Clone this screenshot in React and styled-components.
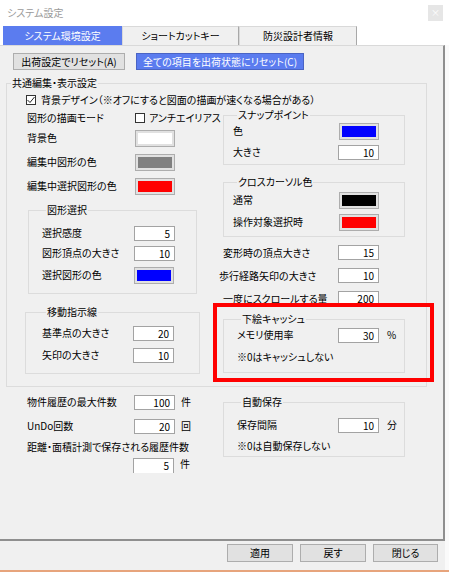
import React from "react";
import styled, { createGlobalStyle } from "styled-components";

const GlobalStyle = createGlobalStyle`
  html, body {
    margin: 0;
    padding: 0;
    background: #fff;
  }
  body {
    font-family: "Noto Sans CJK JP", "Noto Sans", sans-serif;
    font-size: 10px;
    line-height: 12px;
    color: #000;
    font-feature-settings: "palt";
  }
  * {
    box-sizing: border-box;
  }
`;

const Window = styled.div`
  width: 449px;
  height: 572px;
  display: flex;
  flex-direction: column;
  background: #fff;
  border-bottom: 2px solid #e7a47c;
  overflow: hidden;
`;

const TitleBar = styled.div`
  height: 26px;
  flex: none;
  display: flex;
  align-items: center;
  justify-content: space-between;
  padding: 0 6px 0 7px;
`;

const Title = styled.span`
  color: #9a9a9a;
`;

const CloseButton = styled.div`
  width: 15px;
  height: 16px;
  background: #e6e6e6;
  color: #fff;
  font-size: 9px;
  display: flex;
  align-items: center;
  justify-content: center;
`;

const TabStrip = styled.div`
  height: 19px;
  flex: none;
  display: flex;
  padding-left: 3px;
`;

const Tab = styled.div`
  width: ${(p) => p.$w}px;
  height: 19px;
  display: flex;
  align-items: center;
  justify-content: center;
  white-space: nowrap;
  background: ${(p) => (p.$active ? "#5b7cef" : "#f0f0f0")};
  color: ${(p) => (p.$active ? "#fff" : "#000")};
  border: 1px solid ${(p) => (p.$active ? "#5b7cef" : "#d9d9d9")};
  border-right-color: ${(p) => (p.$active ? "#5b7cef" : "#a8a8a8")};
  border-bottom: none;
`;

const Body = styled.div`
  flex: 1;
  display: flex;
  min-height: 0;
`;

const Main = styled.div`
  width: 445px;
  display: flex;
  flex-direction: column;
`;

const Gutter = styled.div`
  flex: 1;
  background: #fafafa;
`;

const Panel = styled.div`
  flex: 1;
  background: #f0f0f0;
  border-top: 1px solid #d9d9d9;
  border-right: 2px solid #8f8f8f;
  border-bottom: 2px solid #8f8f8f;
  padding-top: 7px;
`;

const TopButtons = styled.div`
  display: flex;
  gap: 11px;
  margin-left: 13px;
`;

const Button = styled.div`
  width: ${(p) => p.$w}px;
  height: ${(p) => p.$h || 17}px;
  display: flex;
  align-items: center;
  justify-content: center;
  white-space: nowrap;
  background: ${(p) => (p.$primary ? "#5b7cef" : "#e1e1e1")};
  color: ${(p) => (p.$primary ? "#fff" : "#000")};
  border: 1px solid ${(p) => (p.$primary ? "#4a64c4" : "#adadad")};
`;

const Group = styled.fieldset`
  margin: ${(p) => p.$mt || 0}px 0 0 ${(p) => p.$ml || 0}px;
  width: ${(p) => p.$w}px;
  padding: ${(p) => p.$pt || 0}px 0 ${(p) => p.$pb || 0}px ${(p) => p.$pl || 0}px;
  border: 1px solid #dcdcdc;
  min-width: 0;
`;

const Legend = styled.legend`
  margin-left: 4px;
  padding: 0 1px;
  line-height: 12px;
  white-space: nowrap;
`;

const Highlight = styled.div`
  position: relative;
  margin-top: 3px;

  &::after {
    content: "";
    position: absolute;
    top: -10px;
    left: -6px;
    right: -8px;
    bottom: -9px;
    border: 4px solid #ff0000;
    pointer-events: none;
  }
`;

const CheckRow = styled.div`
  display: flex;
  align-items: center;
  height: 12px;
  margin: 5px 0 0 19px;
  gap: 5px;
  white-space: nowrap;
`;

const Box = styled.span`
  width: 10px;
  height: 10px;
  flex: none;
  border: 1px solid #333;
  background: #fff;
  display: flex;
  align-items: center;
  justify-content: center;
  margin-right: ${(p) => p.$mr || 0}px;
`;

const Columns = styled.div`
  display: grid;
  grid-template-columns: ${(p) => p.$left}px 1fr;
  margin-top: ${(p) => p.$mt || 0}px;
`;

const Column = styled.div`
  display: flex;
  flex-direction: column;
  padding-left: ${(p) => p.$pl || 0}px;
  padding-top: ${(p) => p.$pt || 0}px;
`;

const Row = styled.div`
  display: flex;
  align-items: ${(p) => (p.$top ? "flex-start" : "center")};
  height: ${(p) => p.$h}px;
  padding-top: ${(p) => (p.$top ? 2 : 0)}px;
  white-space: nowrap;
`;

const Label = styled.span`
  width: ${(p) => (p.$w ? `${p.$w}px` : "auto")};
  flex: none;
  white-space: nowrap;
  margin-left: ${(p) => p.$shift || 0}px;
`;

const Field = styled.div`
  width: 41px;
  height: 15px;
  flex: none;
  background: #fff;
  border: 1px solid #a3a3a3;
  border-bottom: ${(p) => (p.$clipped ? "none" : "1px solid #a3a3a3")};
  text-align: right;
  padding-right: 4px;
  line-height: 13px;
`;

const Swatch = styled.div`
  width: 40px;
  height: 17px;
  flex: none;
  border: 1px solid #adadad;
  background: #e1e1e1;
  padding: 2px;

  &::before {
    content: "";
    display: block;
    width: 100%;
    height: 100%;
    background: ${(p) => p.$color};
  }
`;

const Unit = styled.span`
  margin-left: ${(p) => p.$gap || 6}px;
`;

const ButtonBar = styled.div`
  height: 29px;
  flex: none;
  display: flex;
  justify-content: flex-end;
  gap: 7px;
  padding: 3px 7px 0 0;
  background: #f0f0f0;
`;

const Check = ({ checked, mr }) => (
  <Box $mr={mr}>
    {checked && (
      <svg width="8" height="8" viewBox="0 0 8 8">
        <polyline points="0.5,4 3,6.5 7.5,1" fill="none" stroke="#222" strokeWidth="1" />
      </svg>
    )}
  </Box>
);

const NumRow = ({ label, value, h, w, unit, gap, shift }) => (
  <Row $h={h}>
    <Label $w={w} $shift={shift}>{label}</Label>
    <Field>{value}</Field>
    {unit && <Unit $gap={gap}>{unit}</Unit>}
  </Row>
);

const ColorRow = ({ label, color, h, w }) => (
  <Row $h={h}>
    <Label $w={w}>{label}</Label>
    <Swatch $color={color} />
  </Row>
);

export default function App() {
  return (
    <>
      <GlobalStyle />
      <Window>
        <TitleBar>
          <Title>システム設定</Title>
          <CloseButton>×</CloseButton>
        </TitleBar>

        <TabStrip>
          <Tab $w={119} $active>システム環境設定</Tab>
          <Tab $w={117}>ショートカットキー</Tab>
          <Tab $w={118}>防災設計者情報</Tab>
        </TabStrip>

        <Body>
          <Main>
            <Panel>
              <TopButtons>
                <Button $w={112}>出荷設定でリセット(A)</Button>
                <Button $w={168} $primary>全ての項目を出荷状態にリセット(C)</Button>
              </TopButtons>

              <Group $mt={7} $ml={6} $w={421} $pb={12}>
                <Legend>共通編集・表示設定</Legend>
                <CheckRow>
                  <Check checked />
                  <span>背景デザイン（※オフにすると図面の描画が速くなる場合がある）</span>
                </CheckRow>

                <Columns $left={212} $mt={3}>
                  <Column $pl={20}>
                    <Row $h={17}>
                      <Label $w={108}>図形の描画モード</Label>
                      <Check mr={4} />
                      <Label>アンチエイリアス</Label>
                    </Row>
                    <ColorRow h={24} w={108} label="背景色" color="#ffffff" />
                    <ColorRow h={24} w={108} label="編集中図形の色" color="#808080" />
                    <ColorRow h={24} w={108} label="編集中選択図形の色" color="#ff0000" />

                    <Group $mt={6} $ml={1} $w={169} $pt={7} $pb={6} $pl={13}>
                      <Legend>図形選択</Legend>
                      <NumRow h={20} w={92} label="選択感度" value="5" />
                      <NumRow h={20} w={92} label="図形頂点の大きさ" value="10" />
                      <ColorRow h={24} w={92} label="選択図形の色" color="#0000ff" />
                    </Group>

                    <Group $mt={12} $ml={-2} $w={175} $pt={4} $pb={7} $pl={16}>
                      <Legend>移動指示線</Legend>
                      <NumRow h={22} w={91} label="基準点の大きさ" value="20" />
                      <NumRow h={22} w={91} label="矢印の大きさ" value="10" />
                    </Group>
                  </Column>

                  <Column>
                    <Group $ml={4} $w={182} $pb={1} $pl={9}>
                      <Legend>スナップポイント</Legend>
                      <ColorRow h={20} w={106} label="色" color="#0000ff" />
                      <NumRow h={22} w={105} label="大きさ" value="10" />
                    </Group>

                    <Group $mt={11} $ml={4} $w={182} $pt={1} $pb={3} $pl={9}>
                      <Legend>クロスカーソル色</Legend>
                      <ColorRow h={22} w={106} label="通常" color="#000000" />
                      <ColorRow h={22} w={106} label="操作対象選択時" color="#ff0000" />
                    </Group>

                    <Column $pl={4} $pt={4}>
                      <NumRow h={23} w={115} label="変形時の頂点大きさ" value="15" />
                      <NumRow h={23} w={119} shift={-4} label="歩行経路矢印の大きさ" value="10" />
                      <NumRow h={23} w={115} label="一度にスクロールする量" value="200" />
                    </Column>

                    <Highlight>
                      <Group $ml={4} $w={182} $pb={3} $pl={13}>
                        <Legend>下絵キャッシュ</Legend>
                        <NumRow h={20} w={101} label="メモリ使用率" value="30" unit="%" gap={8} />
                        <Row $h={24}>
                          <Label>※0はキャッシュしない</Label>
                        </Row>
                      </Group>
                    </Highlight>
                  </Column>
                </Columns>
              </Group>

              <Columns $left={219}>
                <Column $pl={27} $pt={3}>
                  <NumRow h={24} w={107} label="物件履歴の最大件数" value="100" unit="件" />
                  <NumRow h={24} w={107} label="UnDo回数" value="20" unit="回" />
                  <Row $h={18}>
                    <Label>距離・面積計測で保存される履歴件数</Label>
                  </Row>
                  <Row $h={16} $top>
                    <Label $w={106} />
                    <Field $clipped>5</Field>
                    <Unit>件</Unit>
                  </Row>
                </Column>

                <Column>
                  <Group $mt={9} $ml={4} $w={182} $pt={6} $pl={13}>
                    <Legend>自動保存</Legend>
                    <NumRow h={22} w={101} label="保存間隔" value="10" unit="分" gap={8} />
                    <Row $h={20}>
                      <Label>※0は自動保存しない</Label>
                    </Row>
                  </Group>
                </Column>
              </Columns>
            </Panel>

            <ButtonBar>
              <Button $w={66} $h={18}>適用</Button>
              <Button $w={66} $h={18}>戻す</Button>
              <Button $w={65} $h={18}>閉じる</Button>
            </ButtonBar>
          </Main>
          <Gutter />
        </Body>
      </Window>
    </>
  );
}
